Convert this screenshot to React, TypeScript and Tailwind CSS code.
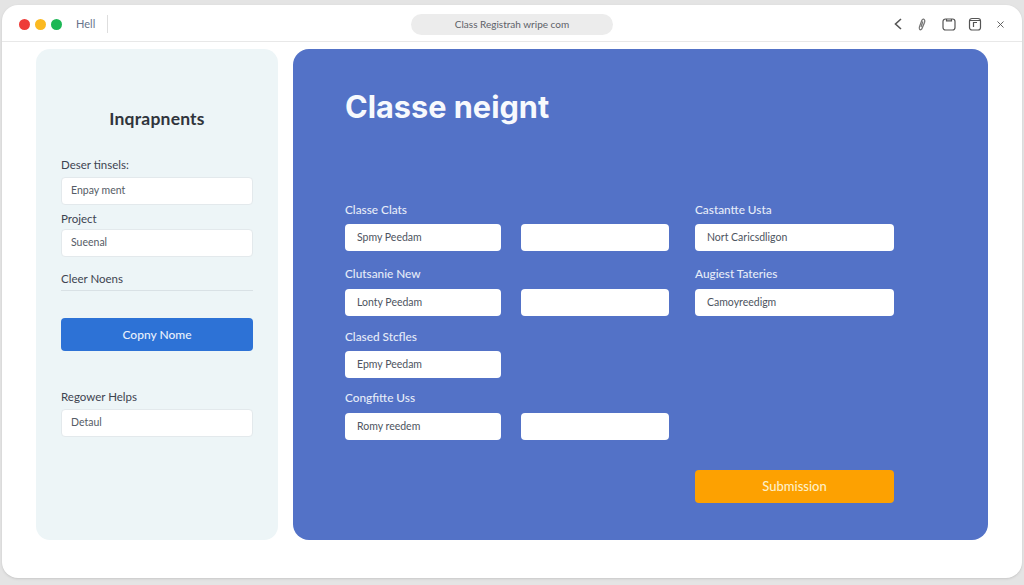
import { X } from 'lucide-react'

const font = "font-['Lato','Liberation_Sans',sans-serif]"

function Input({ value, className = '' }: { value?: string; className?: string }) {
  return (
    <div className={`flex items-center bg-white rounded-[4px] h-[27px] text-[10.5px] text-[#4d5460] pl-3 ${className}`}>
      {value}
    </div>
  )
}

function SideInput({ value }: { value: string }) {
  return (
    <div className="flex items-center h-[28px] bg-white border border-[#e3e9ec] rounded-[4px] pl-[9px] text-[10.5px] text-[#555c66]">
      {value}
    </div>
  )
}

function SideLabel({ children, className = '' }: { children: string; className?: string }) {
  return <div className={`text-[11.5px] leading-[14px] text-[#3d4450] ${className}`}>{children}</div>
}

function FieldLabel({ children, className = '' }: { children: string; className?: string }) {
  return <div className={`text-[11.8px] leading-[14px] font-medium text-[#e6ecf8] ${className}`}>{children}</div>
}

export default function App() {
  return (
    <div className={`h-[585px] w-[1024px] overflow-hidden bg-[#e4e4e4] pt-[5px] px-[2px] ${font}`}>
      <div className="h-[573px] rounded-[16px] bg-white shadow-sm">
        {/* Title bar */}
        <div className="relative flex items-center h-[37px] border-b border-[#e8e8e8] pl-[17px] pt-[2px]">
          <div className="flex items-center gap-[5px]">
            <span className="w-[11px] h-[11px] rounded-full bg-[#ee3b38]" />
            <span className="w-[11px] h-[11px] rounded-full bg-[#fbb921]" />
            <span className="w-[11px] h-[11px] rounded-full bg-[#1cb755]" />
          </div>
          <span className="ml-[14px] text-[11px] text-[#66738a]">Hell</span>
          <span className="ml-[12px] w-px h-[18px] bg-[#dedede]" />
          <div className="absolute left-[409px] top-[9px] w-[202px] h-[21px] rounded-full bg-[#ececec] flex items-center justify-center text-[10px] text-[#5d6168]">
            Class Registrah wripe com
          </div>
          <div className="ml-auto flex items-center pr-[16px] text-[#555]">
            <svg className="mr-[16px]" width="8" height="12" viewBox="0 0 8 12" fill="none" stroke="currentColor" strokeWidth="1.6">
              <path d="M7 1 1.5 6 7 11" />
            </svg>
            <svg className="mr-[16px]" width="8" height="13" viewBox="0 0 8 13" fill="none" stroke="#777" strokeWidth="1.3">
              <path d="M5.6 1.2C6.8 1.6 7 3 6.5 4.5L4 10.5C3.5 11.8 2.2 12 1.6 11.4 1 10.8 1.2 9.5 1.6 8.4L3.8 2.6C4.2 1.6 4.8 1 5.6 1.2Z" />
              <path d="M4.8 3.5 3 9" />
            </svg>
            <svg className="mr-[12px]" width="14" height="14" viewBox="0 0 14 14" fill="none" stroke="#555" strokeWidth="1.2">
              <rect x="1" y="2" width="12" height="11" rx="2.5" />
              <path d="M4.5 2v1.8h5V2" />
            </svg>
            <svg className="mr-[13px]" width="14" height="14" viewBox="0 0 14 14" fill="none" stroke="#555" strokeWidth="1.2">
              <rect x="1.5" y="1.5" width="11" height="11.5" rx="2.5" />
              <path d="M5.5 10V5.5h3.5M1.5 3.5h11" />
            </svg>
            <X size={11} strokeWidth={2} />
          </div>
        </div>

        <div className="flex gap-[15px] pl-[34px] pt-[7px]">
          {/* Left panel */}
          <div className="w-[242px] h-[491px] rounded-[14px] bg-[#edf5f7] px-[25px] pt-[60px]">
            <h2 className="text-center text-[17.5px] leading-[20px] font-bold text-[#30343c] tracking-[0.2px]">Inqrapnents</h2>
            <SideLabel className="mt-[29px]">Deser tinsels:</SideLabel>
            <div className="mt-[5px]"><SideInput value="Enpay ment" /></div>
            <SideLabel className="mt-[7px]">Project</SideLabel>
            <div className="mt-[3px]"><SideInput value="Sueenal" /></div>
            <SideLabel className="mt-[15px] pb-[4px] border-b border-[#d9e1e5]">Cleer Noens</SideLabel>
            <div className="mt-[27px] flex items-center justify-center h-[33px] rounded-[4px] bg-[#2d72d6] text-[12px] font-medium text-[#e8f0fc]">
              Copny Nome
            </div>
            <SideLabel className="mt-[39px]">Regower Helps</SideLabel>
            <div className="mt-[5px]"><SideInput value="Detaul" /></div>
          </div>

          {/* Main panel */}
          <div className="w-[695px] h-[491px] rounded-[16px] bg-[#5372c7] pl-[52px] pt-[38px]">
            <h1 className="font-['Inter',sans-serif] text-[30.7px] leading-[40px] font-bold text-[#f7f9fd]">Classe neignt</h1>
            <div className="mt-[76px] flex gap-[26px]">
              <div className="w-[324px]">
                <FieldLabel>Classe Clats</FieldLabel>
                <div className="mt-[7px] flex gap-[20px]">
                  <Input value="Spmy Peedam" className="w-[156px]" />
                  <Input className="w-[148px]" />
                </div>
                <FieldLabel className="mt-[16px]">Clutsanie New</FieldLabel>
                <div className="mt-[8px] flex gap-[20px]">
                  <Input value="Lonty Peedam" className="w-[156px]" />
                  <Input className="w-[148px]" />
                </div>
                <FieldLabel className="mt-[14px]">Clased Stcfles</FieldLabel>
                <div className="mt-[7px] flex gap-[20px]">
                  <Input value="Epmy Peedam" className="w-[156px]" />
                </div>
                <FieldLabel className="mt-[13px]">Congfitte Uss</FieldLabel>
                <div className="mt-[8px] flex gap-[20px]">
                  <Input value="Romy reedem" className="w-[156px]" />
                  <Input className="w-[148px]" />
                </div>
              </div>
              <div className="w-[199px]">
                <FieldLabel>Castantte Usta</FieldLabel>
                <Input value="Nort Caricsdligon" className="mt-[7px]" />
                <FieldLabel className="mt-[16px]">Augiest Tateries</FieldLabel>
                <Input value="Camoyreedigm" className="mt-[8px]" />
                <div className="mt-[154px] flex items-center justify-center h-[33px] rounded-[4px] bg-[#fda101] text-[13px] font-medium text-[#fdf0c8]">
                  Submission
                </div>
              </div>
            </div>
          </div>
        </div>
      </div>
    </div>
  )
}
